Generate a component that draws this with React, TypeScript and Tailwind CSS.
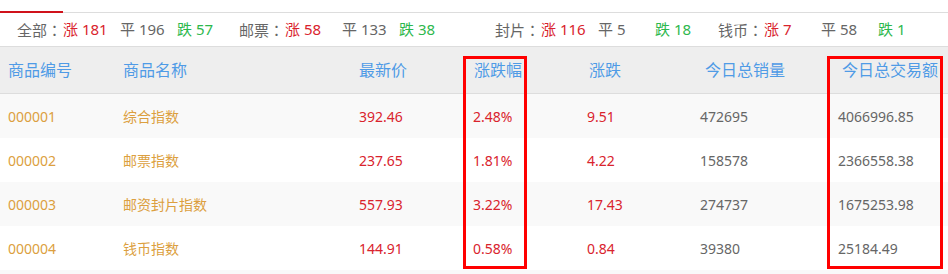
import React from 'react';

// Market summary groups — label + rise / flat / fall counts
const SUMMARY = [
  { label: '全部', up: 181, flat: 196, down: 57, width: 'w-[222px]' },
  { label: '邮票', up: 58, flat: 133, down: 38, width: 'w-[256px]' },
  { label: '封片', up: 116, flat: 5, down: 18, width: 'w-[223px]' },
  { label: '钱币', up: 7, flat: 58, down: 1, width: 'flex-1' },
];

const ROWS = [
  { code: '000001', name: '综合指数', price: '392.46', pct: '2.48%', chg: '9.51', vol: '472695', amt: '4066996.85' },
  { code: '000002', name: '邮票指数', price: '237.65', pct: '1.81%', chg: '4.22', vol: '158578', amt: '2366558.38' },
  { code: '000003', name: '邮资封片指数', price: '557.93', pct: '3.22%', chg: '17.43', vol: '274737', amt: '1675253.98' },
  { code: '000004', name: '钱币指数', price: '144.91', pct: '0.58%', chg: '0.84', vol: '39380', amt: '25184.49' },
];

const GRID = 'grid grid-cols-[115px_236px_114px_114px_113px_138px_1fr]';

export default function App() {
  return (
    <div className="relative h-[274px] w-[948px] overflow-hidden bg-white font-['Noto_Sans','Noto_Sans_CJK_SC',sans-serif]">
      {/* ── Tab strip ─────────────────────────── */}
      <div className="h-[13px] border-b border-[#dddddd] pt-[11px]">
        <div className="h-[2px] w-[63px] bg-[#d0121b]" />
      </div>

      {/* ── Summary counts ────────────────────── */}
      <div className="flex h-[34px] items-center whitespace-nowrap border-b border-[#dddddd] pl-[17px] text-[15px] leading-none text-[#666666]">
        {SUMMARY.map(g => (
          <div key={g.label} className={`flex shrink-0 items-center ${g.width}`}>
            <span className="w-[46px] shrink-0">
              {g.label}
              {/* TC face centres full-width punctuation */}
              <span className="font-['Noto_Sans_CJK_TC',sans-serif]">：</span>
            </span>
            <span className="w-[57px] shrink-0 text-[#d9232d]">涨 {g.up}</span>
            <span className="w-[57px] shrink-0">平 {g.flat}</span>
            <span className="w-[57px] shrink-0 text-[#2db84d]">跌 {g.down}</span>
          </div>
        ))}
      </div>

      {/* ── Table header ──────────────────────── */}
      <div className={`${GRID} h-[47px] items-center border-b border-[#dddddd] bg-[#eeeeee] text-[16px] text-[#4f9be6]`}>
        <span className="pl-2">商品编号</span>
        <span className="pl-2">商品名称</span>
        <span className="pl-2">最新价</span>
        <span className="pl-[9px]">涨跌幅</span>
        <span className="pl-[10px]">涨跌</span>
        <span className="pl-[13px]">今日总销量</span>
        <span className="pl-[12px]">今日总交易额</span>
      </div>

      {/* ── Rows ──────────────────────────────── */}
      {ROWS.map((r, i) => (
        <div
          key={r.code}
          className={`${GRID} h-[44px] items-center text-[14px] ${i % 2 === 0 ? 'bg-[#f9f9f9]' : 'bg-white'}`}
        >
          <span className="pl-2 text-[#dc9f40]">{r.code}</span>
          <span className="pl-2 text-[#dc9f40]">{r.name}</span>
          <span className="pl-2 text-[#d9232d]">{r.price}</span>
          <span className="pl-2 text-[#d9232d]">{r.pct}</span>
          <span className="pl-2 text-[#d9232d]">{r.chg}</span>
          <span className="pl-2 text-[#666666]">{r.vol}</span>
          <span className="pl-2 text-[#666666]">{r.amt}</span>
        </div>
      ))}
      <div className="h-[4px] bg-[#f9f9f9]" />

      {/* ── Highlight annotations ─────────────── */}
      <div className="absolute left-[463px] top-[56px] h-[213px] w-[64px] border-[3px] border-[#ff0000]" />
      <div className="absolute left-[827px] top-[56px] h-[213px] w-[116px] border-[3px] border-[#ff0000]" />
    </div>
  );
}
